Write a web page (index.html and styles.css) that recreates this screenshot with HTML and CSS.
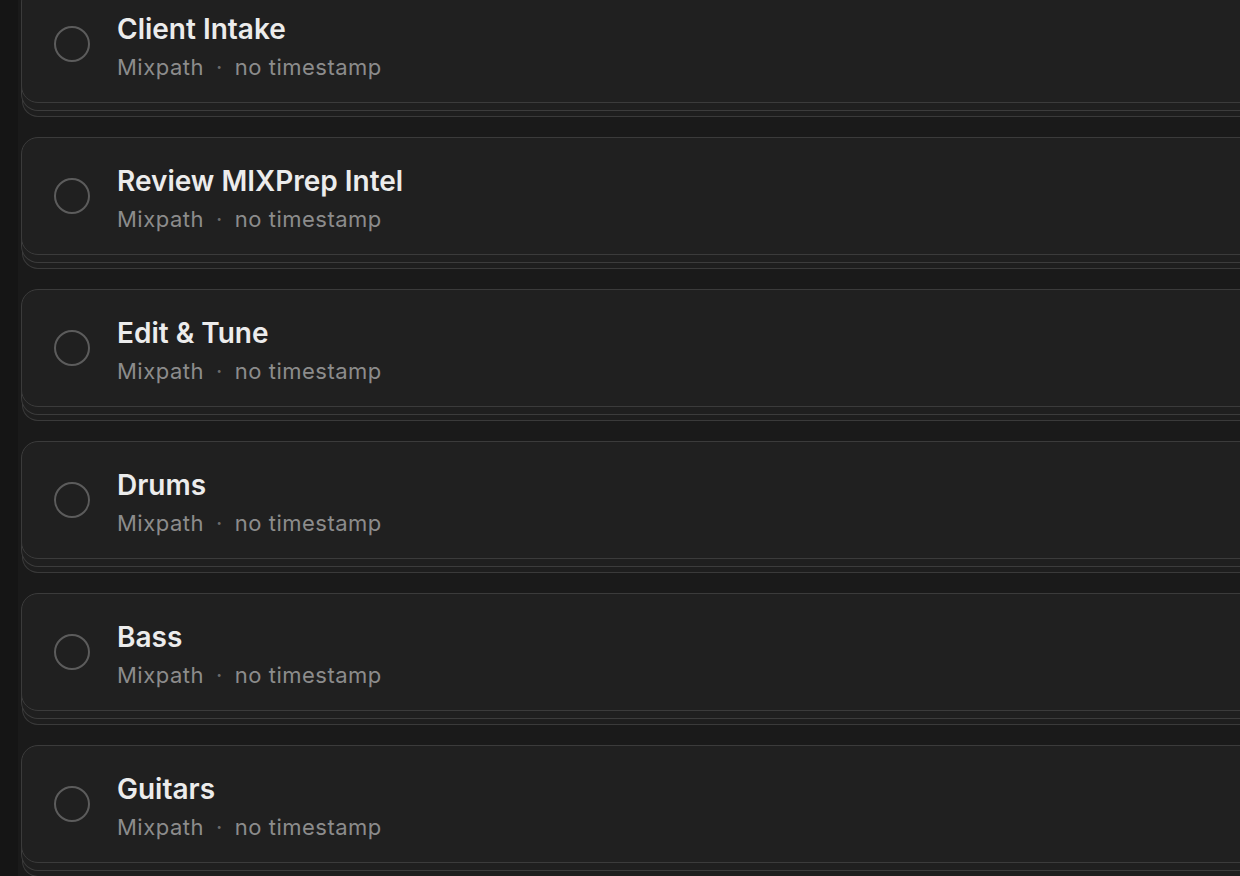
FILE: index.html
```html
<!DOCTYPE html>
<html lang="en">
<head>
<meta charset="utf-8">
<title>Tasks</title>
<link rel="stylesheet" href="styles.css">
</head>
<body>
<div class="app">
  <aside class="rail"></aside>
  <main class="main">
    <ul class="list">
      <li class="card"><span class="check"></span><div class="info"><div class="title">Client Intake</div><div class="meta"><span>Mixpath</span><span class="dot">·</span><span>no timestamp</span></div></div></li>
      <li class="card"><span class="check"></span><div class="info"><div class="title">Review MIXPrep Intel</div><div class="meta"><span>Mixpath</span><span class="dot">·</span><span>no timestamp</span></div></div></li>
      <li class="card"><span class="check"></span><div class="info"><div class="title">Edit &amp; Tune</div><div class="meta"><span>Mixpath</span><span class="dot">·</span><span>no timestamp</span></div></div></li>
      <li class="card"><span class="check"></span><div class="info"><div class="title">Drums</div><div class="meta"><span>Mixpath</span><span class="dot">·</span><span>no timestamp</span></div></div></li>
      <li class="card"><span class="check"></span><div class="info"><div class="title">Bass</div><div class="meta"><span>Mixpath</span><span class="dot">·</span><span>no timestamp</span></div></div></li>
      <li class="card"><span class="check"></span><div class="info"><div class="title">Guitars</div><div class="meta"><span>Mixpath</span><span class="dot">·</span><span>no timestamp</span></div></div></li>
    </ul>
  </main>
</div>
</body>
</html>
```

FILE: styles.css
```css
html, body {
  margin: 0;
  padding: 0;
  height: 100%;
  overflow: hidden;
  background: #1a1a1a;
  font-family: Inter, "Noto Sans", "Liberation Sans", sans-serif;
}
.app {
  display: flex;
  height: 876px;
}
.rail {
  width: 18px;
  flex: none;
  background: #151515;
}
.main {
  flex: 1;
  background: #1a1a1a;
  padding-left: 3px;
  overflow: hidden;
}
.list {
  list-style: none;
  margin: -15px -40px 0 0;
  padding: 0;
  display: flex;
  flex-direction: column;
  gap: 34px;
}
.card {
  box-sizing: border-box;
  height: 118px;
  display: flex;
  align-items: center;
  background: #202020;
  border: 1px solid #3b3b3b;
  border-radius: 17px;
  padding-left: 32px;
  box-shadow:
    0 8px 0 -1px #1f1f1f,
    0 8px 0 0 #3c3c3c,
    0 15px 0 -2px #1e1e1e,
    0 15px 0 -1px #3a3a3a;
}
.check {
  width: 32px;
  height: 32px;
  border: 2px solid #5c5c5c;
  border-radius: 50%;
  flex: none;
}
.info {
  margin-left: 27px;
  display: flex;
  flex-direction: column;
  gap: 9px;
  margin-top: 4px;
}
.title {
  color: #ececec;
  font-size: 28px;
  font-weight: 600;
  line-height: 32px;
}
.meta {
  color: #8c8c8c;
  font-size: 22px;
  line-height: 26px;
  letter-spacing: 0.5px;
  display: flex;
}
.dot {
  margin: 0 12px;
  color: #6a6a6a;
}
```
